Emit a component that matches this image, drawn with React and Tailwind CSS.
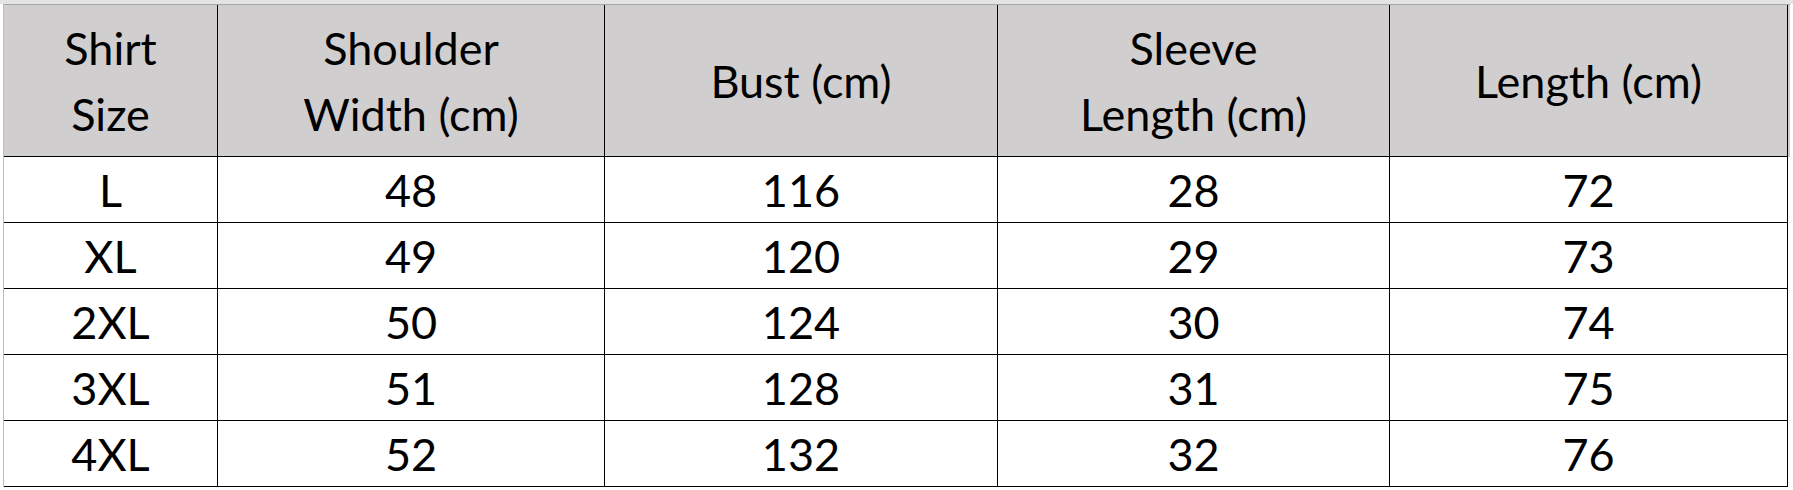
const headers = [
  ["Shirt", "Size"],
  ["Shoulder", "Width (cm)"],
  ["Bust (cm)"],
  ["Sleeve", "Length (cm)"],
  ["Length (cm)"],
];

const rows = [
  ["L", "48", "116", "28", "72"],
  ["XL", "49", "120", "29", "73"],
  ["2XL", "50", "124", "30", "74"],
  ["3XL", "51", "128", "31", "75"],
  ["4XL", "52", "132", "32", "76"],
];

const cols = "grid grid-cols-[214px_387px_393px_392px_398px]";

export default function App() {
  return (
    <div
      className="w-[1793px] h-[490px] bg-white text-black overflow-hidden"
      style={{ fontFamily: "Lato, 'Open Sans', sans-serif" }}
    >
      <div className="h-[4px] bg-[#e4e4e4]" />
      <div className="ml-[3px] w-[1787px] border-l border-t border-l-[#bdbdbd] border-t-[#a6a6a6]">
        <div className={`${cols} bg-[#d0cece]`}>
          {headers.map((h, i) => (
            <div
              key={i}
              className="h-[152px] border-r border-b border-black flex flex-col items-center justify-center text-[45px] leading-[66px]"
            >
              {h.map((line) => (
                <span key={line}>{line}</span>
              ))}
            </div>
          ))}
        </div>
        {rows.map((r) => (
          <div key={r[0]} className={cols}>
            {r.map((v, i) => (
              <div
                key={i}
                className="h-[66px] border-r border-b border-black flex items-center justify-center text-[45px] leading-none pt-[2px]"
              >
                {v}
              </div>
            ))}
          </div>
        ))}
      </div>
    </div>
  );
}
